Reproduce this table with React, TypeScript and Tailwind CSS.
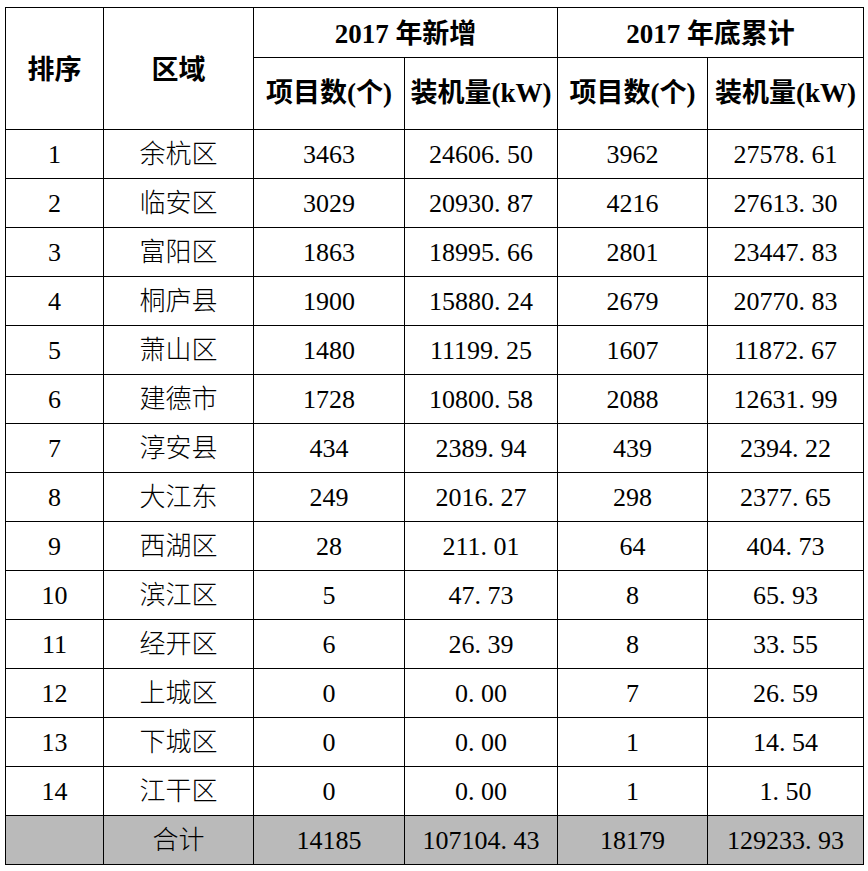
import React from "react";

type Row = {
  rank: string;
  area: string;
  newCount: string;
  newCap: string;
  totalCount: string;
  totalCap: string;
};

const rows: Row[] = [
  { rank: "1", area: "余杭区", newCount: "3463", newCap: "24606.50", totalCount: "3962", totalCap: "27578.61" },
  { rank: "2", area: "临安区", newCount: "3029", newCap: "20930.87", totalCount: "4216", totalCap: "27613.30" },
  { rank: "3", area: "富阳区", newCount: "1863", newCap: "18995.66", totalCount: "2801", totalCap: "23447.83" },
  { rank: "4", area: "桐庐县", newCount: "1900", newCap: "15880.24", totalCount: "2679", totalCap: "20770.83" },
  { rank: "5", area: "萧山区", newCount: "1480", newCap: "11199.25", totalCount: "1607", totalCap: "11872.67" },
  { rank: "6", area: "建德市", newCount: "1728", newCap: "10800.58", totalCount: "2088", totalCap: "12631.99" },
  { rank: "7", area: "淳安县", newCount: "434", newCap: "2389.94", totalCount: "439", totalCap: "2394.22" },
  { rank: "8", area: "大江东", newCount: "249", newCap: "2016.27", totalCount: "298", totalCap: "2377.65" },
  { rank: "9", area: "西湖区", newCount: "28", newCap: "211.01", totalCount: "64", totalCap: "404.73" },
  { rank: "10", area: "滨江区", newCount: "5", newCap: "47.73", totalCount: "8", totalCap: "65.93" },
  { rank: "11", area: "经开区", newCount: "6", newCap: "26.39", totalCount: "8", totalCap: "33.55" },
  { rank: "12", area: "上城区", newCount: "0", newCap: "0.00", totalCount: "7", totalCap: "26.59" },
  { rank: "13", area: "下城区", newCount: "0", newCap: "0.00", totalCount: "1", totalCap: "14.54" },
  { rank: "14", area: "江干区", newCount: "0", newCap: "0.00", totalCount: "1", totalCap: "1.50" },
];

// The source uses SimSun-style half-width dots, so the "." sits in a full digit cell.
function Num({ value }: { value: string }) {
  const [int, frac] = value.split(".");
  if (frac === undefined) return <>{value}</>;
  return (
    <>
      {int}
      <span className="inline-block w-[0.5em] text-left">.</span>
      {frac}
    </>
  );
}

const cell = "border border-black text-center align-middle p-0";
const head = `${cell} font-bold text-[27px]`;

export default function App() {
  return (
    <div
      className="min-h-[871px] bg-white pl-[5px] pt-[7px] text-black"
      style={{ fontFamily: '"Liberation Serif", "Noto Sans CJK SC", serif' }}
    >
      <table className="table-fixed border-collapse w-[858px]">
        <colgroup>
          <col className="w-[98px]" />
          <col className="w-[150px]" />
          <col className="w-[151px]" />
          <col className="w-[153px]" />
          <col className="w-[150px]" />
          <col className="w-[156px]" />
        </colgroup>
        <thead>
          <tr className="h-[50px]">
            <th rowSpan={2} className={`${head} pt-[4px]`}>
              排序
            </th>
            <th rowSpan={2} className={`${head} pt-[4px]`}>
              区域
            </th>
            <th colSpan={2} className={`${head} pt-[4px]`}>
              2017 年新增
            </th>
            <th colSpan={2} className={`${head} pt-[4px]`}>
              2017 年底累计
            </th>
          </tr>
          <tr className="h-[72px]">
            <th className={head}>项目数(个)</th>
            <th className={head}>装机量(kW)</th>
            <th className={head}>项目数(个)</th>
            <th className={head}>装机量(kW)</th>
          </tr>
        </thead>
        <tbody className="text-[26px] font-normal">
          {rows.map((r) => (
            <tr key={r.rank} className="h-[49px]">
              <td className={cell}>{r.rank}</td>
              <td className={`${cell} font-light`}>{r.area}</td>
              <td className={cell}>{r.newCount}</td>
              <td className={cell}>
                <Num value={r.newCap} />
              </td>
              <td className={cell}>{r.totalCount}</td>
              <td className={cell}>
                <Num value={r.totalCap} />
              </td>
            </tr>
          ))}
          <tr className="h-[49px] bg-[#bababa]">
            <td className={cell}></td>
            <td className={`${cell} font-light`}>合计</td>
            <td className={cell}>14185</td>
            <td className={cell}>
              <Num value="107104.43" />
            </td>
            <td className={cell}>18179</td>
            <td className={cell}>
              <Num value="129233.93" />
            </td>
          </tr>
        </tbody>
      </table>
    </div>
  );
}
